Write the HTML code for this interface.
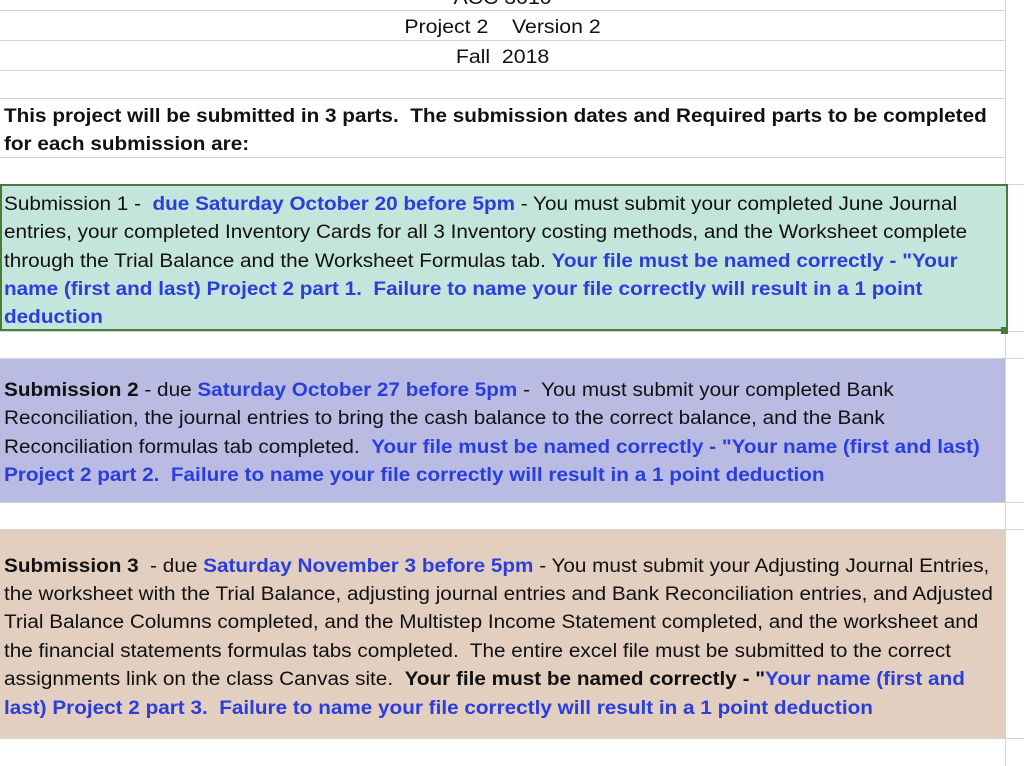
<!DOCTYPE html>
<html><head><meta charset="utf-8"><style>
body{margin:0;width:1024px;height:766px;background:#fff;position:relative;overflow:hidden;font-family:"Liberation Sans",Arial,sans-serif;font-size:19px;color:#111}
.h{position:absolute;left:0;width:1005px;height:1px;background:#d4d4d4}
.v{position:absolute;left:1005px;top:0;width:1px;height:766px;background:#d4d4d4}
.l{position:absolute;left:4px;white-space:nowrap;line-height:22px;height:22px;transform:scaleX(1.09);transform-origin:0 0;margin-top:2px}
.c{position:absolute;left:0;width:1005px;text-align:center;line-height:22px;transform:scaleX(1.12);transform-origin:502px 0;margin-top:2px}
b{font-weight:bold}
.u{color:#2a3ede;font-weight:bold}
.box{position:absolute;left:0;width:1005px}
</style></head><body>
<div class="v"></div>
<div class="h" style="top:10px"></div>
<div class="h" style="top:40px"></div>
<div class="h" style="top:70px"></div>
<div class="h" style="top:98px"></div>
<div class="h" style="top:157px"></div>
<div class="h" style="top:184px;width:1024px"></div>
<div class="h" style="top:331px;width:1024px"></div>
<div class="h" style="top:358px;width:1024px"></div>
<div class="h" style="top:502px;width:1024px"></div>
<div class="h" style="top:529px;width:1024px"></div>
<div class="h" style="top:738px;width:1024px"></div>
<div class="c" style="top:-14px">ACC 3010</div>
<div class="c" style="top:15px">Project 2&nbsp;&nbsp;&nbsp; Version 2</div>
<div class="c" style="top:45px">Fall&nbsp; 2018</div>
<div class="l" style="top:104px"><b>This project will be submitted in 3 parts.&nbsp; The submission dates and Required parts to be completed</b></div>
<div class="l" style="top:132px"><b>for each submission are:</b></div>

<div class="box" style="top:184px;height:147px;width:1008px;background:#c4e5dc;border:2px solid #4a7a3a;box-sizing:border-box"></div>
<div style="position:absolute;left:1001px;top:327px;width:7px;height:7px;background:#4a7a3a"></div>
<div class="l" style="top:192px">Submission 1 -&nbsp; <span class="u">due Saturday October 20 before 5pm</span> - You must submit your completed June Journal</div>
<div class="l" style="top:220px">entries, your completed Inventory Cards for all 3 Inventory costing methods, and the Worksheet complete</div>
<div class="l" style="top:249px">through the Trial Balance and the Worksheet Formulas tab. <span class="u">Your file must be named correctly - "Your</span></div>
<div class="l" style="top:277px"><span class="u">name (first and last) Project 2 part 1.&nbsp; Failure to name your file correctly will result in a 1 point</span></div>
<div class="l" style="top:305px"><span class="u">deduction</span></div>

<div class="box" style="top:359px;height:143px;background:#b9bbe2"></div>
<div class="l" style="top:378px"><b>Submission 2</b> - due <span class="u">Saturday October 27 before 5pm</span> -&nbsp; You must submit your completed Bank</div>
<div class="l" style="top:406px">Reconciliation, the journal entries to bring the cash balance to the correct balance, and the Bank</div>
<div class="l" style="top:435px">Reconciliation formulas tab completed.&nbsp; <span class="u">Your file must be named correctly - "Your name (first and last)</span></div>
<div class="l" style="top:463px"><span class="u">Project 2 part 2.&nbsp; Failure to name your file correctly will result in a 1 point deduction</span></div>

<div class="box" style="top:530px;height:208px;background:#e3cfc0"></div>
<div class="l" style="top:554px"><b>Submission 3</b>&nbsp; - due <span class="u">Saturday November 3 before 5pm</span> - You must submit your Adjusting Journal Entries,</div>
<div class="l" style="top:582px">the worksheet with the Trial Balance, adjusting journal entries and Bank Reconciliation entries, and Adjusted</div>
<div class="l" style="top:610px">Trial Balance Columns completed, and the Multistep Income Statement completed, and the worksheet and</div>
<div class="l" style="top:639px">the financial statements formulas tabs completed.&nbsp; The entire excel file must be submitted to the correct</div>
<div class="l" style="top:667px">assignments link on the class Canvas site.&nbsp; <b>Your file must be named correctly - "</b><span class="u">Your name (first and</span></div>
<div class="l" style="top:696px"><span class="u">last) Project 2 part 3.&nbsp; Failure to name your file correctly will result in a 1 point deduction</span></div>
</body></html>
